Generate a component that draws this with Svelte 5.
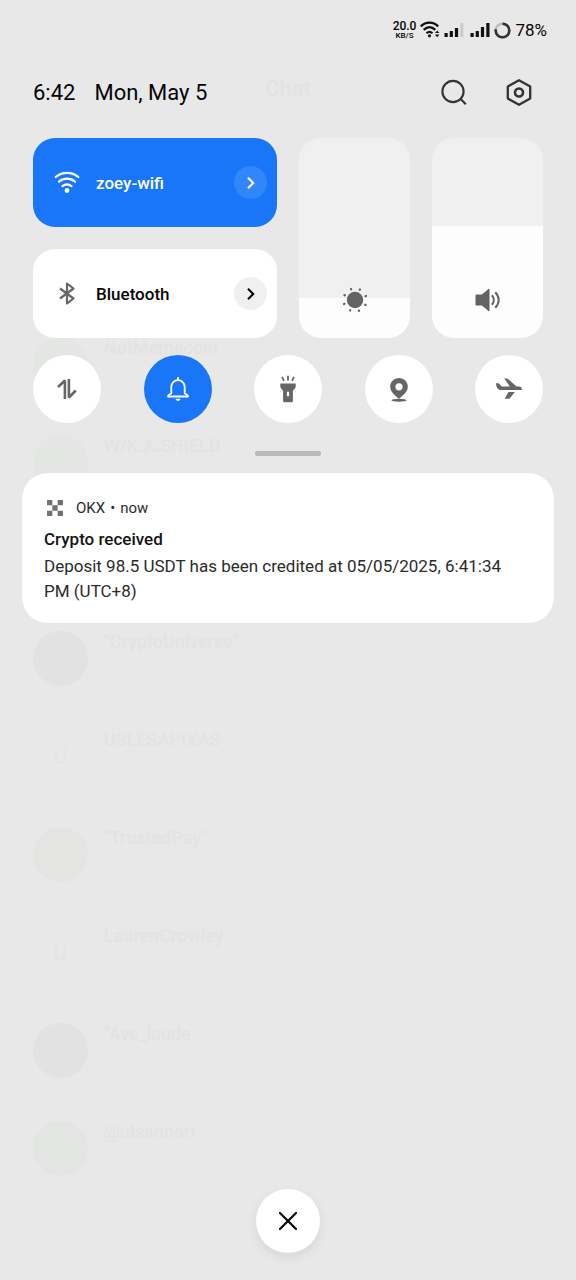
<script lang="ts">
  type Chat = { name: string; tone?: string; initials?: string; preview: number[]; time?: number };

  const chats: Chat[] = [
    { name: 'NotMemecoin', tone: 'green', preview: [] },
    { name: 'W/K.A.SHIELD', tone: 'green', preview: [] },
    { name: '', preview: [] },
    { name: '"CryptoUniverse"', tone: 'gray', preview: [16, 108, 46, 62, 16], time: 16 },
    { name: 'USLESAPIXAS', initials: 'U', preview: [16, 78, 16, 46], time: 16 },
    { name: '"TrustedPay"', tone: 'warm', preview: [16, 78, 16, 46], time: 46 },
    { name: 'LaurenCrowley', initials: 'U', preview: [92, 30, 46, 62, 62], time: 46 },
    { name: '"Ave_laude', tone: 'gray', preview: [16, 62, 16, 46], time: 46 },
    { name: '@ulsannori', tone: 'mixed', preview: [] },
  ];

  let wifi = $state(true);
  let bluetooth = $state(false);
  let brightness = $state(20);
  let volume = $state(56);

  let toggles = $state([
    { id: 'data', label: 'Mobile data', on: false },
    { id: 'bell', label: 'Ring', on: true },
    { id: 'torch', label: 'Flashlight', on: false },
    { id: 'location', label: 'Location', on: false },
    { id: 'plane', label: 'Airplane mode', on: false },
  ]);
</script>

{#snippet chevron()}
  <svg width="16" height="16" viewBox="0 0 16 16" fill="none" stroke="currentColor" stroke-width="2.1" aria-hidden="true">
    <path d="M5 2.8 10.200 8 5 13.200" />
  </svg>
{/snippet}

<div class="screen">
  <div class="backdrop" aria-hidden="true">
    <div class="chat-title">Chat</div>
    {#each chats as chat}
      <div class="chat">
        <span class="avatar {chat.tone ?? ''}">{chat.initials ?? ''}</span>
        <div class="chat-body">
          <div class="chat-name">{chat.name}</div>
          <div class="preview">
            {#each chat.preview as width}
              <i style="width: {width}px"></i>
            {/each}
          </div>
        </div>
        {#if chat.time}<i class="time" style="width: {chat.time}px"></i>{/if}
      </div>
    {/each}
  </div>

  <main class="shade">
    <div class="status-bar">
      <div class="speed"><span>20.0</span><small>KB/S</small></div>
      <svg width="20" height="18" viewBox="0 0 20 18" fill="none" stroke="#111" stroke-width="2.2" aria-hidden="true">
        <path d="M.8 5.400C5.8.4 13.200.4 18.200 5.400M3.700 8.900c3.600-3.600 8-3.600 11.600 0M6.500 12.300c1.800-1.800 4.200-1.800 6 0" />
        <circle cx="9.500" cy="14.800" r="1.600" fill="#111" stroke="none" />
        <path d="m15 12 2.200-2.600 2.200 2.600zM15 13.600l2.200 2.600 2.200-2.600z" fill="#111" stroke="none" />
      </svg>
      <svg width="20" height="16" viewBox="0 0 20 16" fill="#111" aria-hidden="true">
        <path d="M.5 11h3.200v4H.5zM5.700 9h3.200v6H5.700zM10.900 6h3.200v9h-3.200z" />
        <path d="M16.300 1h3v14h-3z" fill="#cacaca" />
      </svg>
      <svg class="sim" width="20" height="16" viewBox="0 0 20 16" fill="#111" aria-hidden="true">
        <path d="M.5 11h3.200v4H.5zM5.700 9h3.200v6H5.700zM10.900 5h3.200v10h-3.200zM16.300 1h3.200v14h-3.200z" />
      </svg>
      <svg width="17" height="17" viewBox="0 0 17 17" fill="none" stroke-width="2.6" aria-hidden="true">
        <circle cx="8.5" cy="8.5" r="6.8" stroke="#bcbcbc" />
        <circle cx="8.5" cy="8.5" r="6.8" stroke="#333" pathLength="100" stroke-dasharray="78 22" transform="rotate(-90 8.5 8.5)" />
      </svg>
      <span class="battery">78%</span>
    </div>

    <header>
      <time>6:42</time>
      <span class="date">Mon, May 5</span>
      <button class="icon-btn" aria-label="Search">
        <svg width="28" height="28" viewBox="0 0 28 28" fill="none" stroke="#333" stroke-width="2.1" aria-hidden="true">
          <circle cx="13" cy="12.5" r="10.6" />
          <path d="m20.300 19.800 5.500 5.500" />
        </svg>
      </button>
      <button class="icon-btn" aria-label="Settings">
        <svg width="28" height="28" viewBox="0 0 28 28" fill="none" stroke="#333" stroke-width="2.3" stroke-linejoin="round" aria-hidden="true">
          <path d="M14 1.200 25.200 7.400v12.200L14 25.800 2.800 19.600V7.400z" />
          <circle cx="14" cy="13.500" r="4" stroke-width="2.6" />
        </svg>
      </button>
    </header>

    <section class="controls">
      <div class="tile" class:on={wifi}>
        <button class="tile-main" aria-pressed={wifi} onclick={() => (wifi = !wifi)}>
          <svg width="28" height="24" viewBox="0 0 28 24" fill="none" stroke="currentColor" stroke-width="2.2" stroke-linecap="round" aria-hidden="true">
            <path d="M2.700 6C9.200.5 18.800.5 25.300 6M6 10.700c4.700-4 11.300-4 16 0M9.500 15.100c2.700-2.200 6.300-2.200 9 0" />
            <circle cx="14" cy="19.500" r="2.400" fill="currentColor" stroke="none" />
          </svg>
          <span>zoey-wifi</span>
        </button>
        <button class="more" aria-label="Wi-Fi networks">{@render chevron()}</button>
      </div>

      <div class="tile" class:on={bluetooth}>
        <button class="tile-main" aria-pressed={bluetooth} onclick={() => (bluetooth = !bluetooth)}>
          <svg class="gray-icon" width="28" height="24" viewBox="0 0 28 24" fill="none" stroke="currentColor" stroke-width="2.2" stroke-linejoin="round" aria-hidden="true">
            <path d="m7 6.500 13.500 10-6.500 5V1.500l6.500 5L7 16.500" />
          </svg>
          <span>Bluetooth</span>
        </button>
        <button class="more" aria-label="Bluetooth devices">{@render chevron()}</button>
      </div>

      <label class="slider">
        <input type="range" min="0" max="100" bind:value={brightness} aria-label="Brightness" style="--level: {brightness}%" />
        <svg width="28" height="28" viewBox="0 0 28 28" aria-hidden="true">
          <circle cx="14" cy="14" r="8.2" fill="#636363" />
          <g stroke="#636363" stroke-width="2.2" stroke-linecap="round">
            {#each [25, 70, 115, 160, 205, 250, 295, 340] as angle}
              <path d="M14 2.300v.5" transform="rotate({angle} 14 14)" />
            {/each}
          </g>
        </svg>
      </label>

      <label class="slider">
        <input type="range" min="0" max="100" bind:value={volume} aria-label="Volume" style="--level: {volume}%" />
        <svg width="28" height="28" viewBox="0 0 28 28" fill="none" stroke="#636363" stroke-width="2" aria-hidden="true">
          <path d="M2 9h6l7-6v22l-7-6H2z" fill="#636363" stroke-width="1" stroke-linejoin="round" />
          <path d="M17.800 9.200c2.700 2.600 2.700 7 0 9.600M21.300 6.300c4.500 4.500 4.500 10.900 0 15.400" />
        </svg>
      </label>
    </section>

    <section class="toggles">
      {#each toggles as item (item.id)}
        <button class="toggle" class:on={item.on} aria-label={item.label} aria-pressed={item.on} onclick={() => (item.on = !item.on)}>
          <svg width="28" height="28" viewBox="0 0 28 28" fill="none" stroke="currentColor" stroke-width="2.6" aria-hidden="true">
            {#if item.id === 'data'}
              <path d="M11.900 24V5.500L5 12M15.900 4v18.500l6.900-7" stroke-linejoin="bevel" />
            {:else if item.id === 'bell'}
              <path d="M7.300 18.200v-6.400a6.700 6.700 0 0 1 13.400 0v6.400c0 1.200 3.300.3 3.300 3.300H4c0-3 3.300-2.100 3.300-3.300z" stroke-width="1.8" stroke-linejoin="round" />
              <path d="M14 3v2" stroke-linecap="round" stroke-width="2" />
              <path d="M11.500 23.800h5c-.6 2.700-4.400 2.700-5 0z" fill="currentColor" stroke="none" />
            {:else if item.id === 'torch'}
              <path d="M6.300 8.500h15.400v3.300c0 2-2.600 2.800-2.800 4.500v9.500c0 1-.5 1.500-1.500 1.500h-6.800c-1 0-1.500-.5-1.500-1.500v-9.500c-.2-1.700-2.800-2.500-2.800-4.500zm6.600 8.200v4.600h2.200v-4.600z" fill="currentColor" fill-rule="evenodd" stroke="none" />
              <path d="M14 .7v4.800M8 2l2 3.800M20 2l-2 3.800" stroke-width="1.8" />
            {:else if item.id === 'location'}
              <path d="M14 2.900c-5 0-8.800 3.700-8.800 8.500 0 5.300 4.500 8.500 8.800 12.400 4.300-3.900 8.800-7.100 8.800-12.400 0-4.800-3.800-8.500-8.800-8.500zm0 5.300a3.600 3.600 0 1 1 0 7.200 3.600 3.600 0 0 1 0-7.200z" fill="currentColor" fill-rule="evenodd" stroke="none" />
              <ellipse cx="14" cy="25.2" rx="7.600" ry="1.500" fill="currentColor" stroke="none" />
            {:else}
              <path d="M1 8.200h2.600l3.200 3.200h8L9.200 3.600h3.200l9.200 7.800h2.800c1.700 0 2.600 1.600 2.600 3.600H5.800C3 15 1.200 12.400 1 8.200zM13.500 16.900h6.300l-5.300 6.800H9.700z" fill="currentColor" stroke="none" />
            {/if}
          </svg>
        </button>
      {/each}
    </section>

    <div class="handle"></div>

    <article class="notification">
      <div class="source">
        <svg width="16" height="16" viewBox="0 0 15 15" fill="#737373" aria-hidden="true">
          <path d="M0 0h5v5H0zM10 0h5v5h-5zM5 5h5v5H5zM0 10h5v5H0zM10 10h5v5h-5z" />
        </svg>
        <div class="source-text"><span>OKX</span><span>•</span><span>now</span></div>
      </div>
      <h2>Crypto received</h2>
      <p>Deposit 98.5 USDT has been credited at 05/05/2025, 6:41:34 PM (UTC+8)</p>
    </article>

    <button class="clear" aria-label="Clear notifications">
      <svg width="20" height="20" viewBox="0 0 20 20" fill="none" stroke="currentColor" stroke-width="2.2" stroke-linecap="round" aria-hidden="true">
        <path d="m2 2 16 16M18 2 2 18" />
      </svg>
    </button>
  </main>
</div>

<style>
  :global(body) {
    margin: 0;
    background: #e8e8e8;
  }

  .screen {
    position: relative;
    min-height: 100vh;
    overflow: hidden;
    background: #e8e8e8;
    color: #050505;
    font-family: Roboto, "Liberation Sans", sans-serif;
  }

  button {
    padding: 0;
    border: 0;
    background: none;
    color: inherit;
    font: inherit;
    cursor: pointer;
  }

  svg {
    display: block;
    flex: none;
  }

  /* chat list showing faintly through the shade */
  .backdrop {
    position: absolute;
    inset: 0;
    display: flex;
    flex-direction: column;
    padding: 76px 33px 0;
    overflow: hidden;
    color: #e3e3e3;
  }

  .chat-title {
    height: 261px;
    text-align: center;
    font-size: 22px;
    line-height: 26px;
    font-weight: 700;
  }

  .chat {
    display: flex;
    flex: none;
    gap: 16px;
    height: 98px;
  }

  .avatar {
    display: flex;
    flex: none;
    align-items: center;
    justify-content: center;
    width: 55px;
    height: 55px;
    border-radius: 50%;
    color: #e5e5e5;
    font-size: 22px;
  }

  .avatar.gray { background: #e2e2e2; }
  .avatar.green { background: #e3e6e2; }
  .avatar.warm { background: #e4e4e2; }
  .avatar.mixed { background: #e3e5e3; }

  .chat-body {
    flex: 1;
    min-width: 0;
  }

  .chat-name {
    height: 22px;
    font-size: 18px;
    line-height: 22px;
    font-weight: 500;
  }

  .preview {
    display: flex;
    gap: 16px;
    padding: 8px 22px;
  }

  .preview i,
  .time {
    flex: none;
    height: 7px;
    background: #e7e7e7;
  }

  .time {
    height: 15px;
    margin-top: 4px;
  }

  .shade {
    position: relative;
    display: flex;
    flex-direction: column;
    box-sizing: border-box;
    min-height: 100vh;
    padding: 18px 22px 27px;
  }

  .status-bar {
    display: flex;
    align-items: center;
    justify-content: flex-end;
    gap: 4px;
    height: 24px;
    padding-right: 7px;
  }

  .speed {
    display: flex;
    flex-direction: column;
    align-items: center;
    font-size: 12px;
    line-height: 12px;
    font-weight: 500;
  }

  .speed small {
    font-size: 8px;
    line-height: 8px;
    font-weight: 500;
  }

  .sim {
    margin-left: 2px;
  }

  .battery {
    font-size: 17px;
    line-height: 24px;
  }

  header {
    display: flex;
    align-items: center;
    height: 40px;
    margin: 31px 19px 0 11px;
    font-size: 22px;
    line-height: 28px;
  }

  .date {
    flex: 1;
    margin-left: 19px;
  }

  .icon-btn {
    padding: 2px;
  }

  .icon-btn + .icon-btn {
    margin-left: 33px;
  }

  .controls {
    display: grid;
    grid-template-columns: 11fr 5fr 5fr;
    grid-template-rows: 89px 89px;
    gap: 22px;
    margin: 25px 11px 0;
  }

  .tile {
    display: flex;
    align-items: center;
    grid-column: 1;
    padding-right: 10px;
    border-radius: 22px;
    background: #fff;
  }

  .tile.on {
    background: #1976f8;
    color: #fff;
  }

  .tile-main {
    display: flex;
    flex: 1;
    align-items: center;
    align-self: stretch;
    gap: 15px;
    padding-left: 20px;
    font-size: 17px;
    font-weight: 500;
  }

  .gray-icon {
    color: #666;
  }

  .tile.on .gray-icon {
    color: inherit;
  }

  .more {
    display: flex;
    align-items: center;
    justify-content: center;
    width: 33px;
    height: 33px;
    border-radius: 50%;
    background: #f0f0f0;
  }

  .tile.on .more {
    background: #3186fa;
  }

  .slider {
    position: relative;
    grid-row: 1 / 3;
    overflow: hidden;
    border-radius: 22px;
  }

  .slider:nth-of-type(1) { grid-column: 2; }
  .slider:nth-of-type(2) { grid-column: 3; }

  .slider input {
    display: block;
    width: 100%;
    height: 100%;
    margin: 0;
    appearance: none;
    writing-mode: vertical-lr;
    direction: rtl;
    background: linear-gradient(to top, #fdfdfd var(--level), #f0f0f0 var(--level));
    cursor: pointer;
  }

  .slider input::-webkit-slider-thumb {
    appearance: none;
    width: 100%;
    height: 1px;
    background: transparent;
  }

  .slider svg {
    position: absolute;
    bottom: 24px;
    left: 50%;
    transform: translateX(-50%);
    pointer-events: none;
  }

  .toggles {
    display: flex;
    justify-content: space-between;
    margin: 17px 11px 0;
  }

  .toggle {
    display: flex;
    align-items: center;
    justify-content: center;
    width: 68px;
    height: 68px;
    border-radius: 50%;
    background: #fff;
    color: #666;
  }

  .toggle.on {
    background: #1976f8;
    color: #fff;
  }

  .handle {
    align-self: center;
    width: 66px;
    height: 5px;
    margin-top: 28px;
    border-radius: 2px;
    background: #b9b9b9;
  }

  .notification {
    margin-top: 17px;
    padding: 24px 44px 19px 22px;
    border-radius: 26px;
    background: #fff;
    color: #2b2b2b;
  }

  .source {
    display: flex;
    align-items: center;
    gap: 13px;
    padding-left: 3px;
    font-size: 15px;
    line-height: 22px;
  }

  .source-text {
    display: flex;
    gap: 5px;
  }

  h2 {
    margin: 8px 0 3px;
    color: #151515;
    font-size: 17px;
    line-height: 24px;
    font-weight: 500;
  }

  p {
    margin: 0;
    font-size: 17px;
    line-height: 25px;
  }

  .clear {
    display: flex;
    align-items: center;
    justify-content: center;
    align-self: center;
    width: 64px;
    height: 64px;
    margin-top: auto;
    border-radius: 50%;
    background: #fff;
    box-shadow: 0 4px 12px rgba(0, 0, 0, 0.08);
  }
</style>
